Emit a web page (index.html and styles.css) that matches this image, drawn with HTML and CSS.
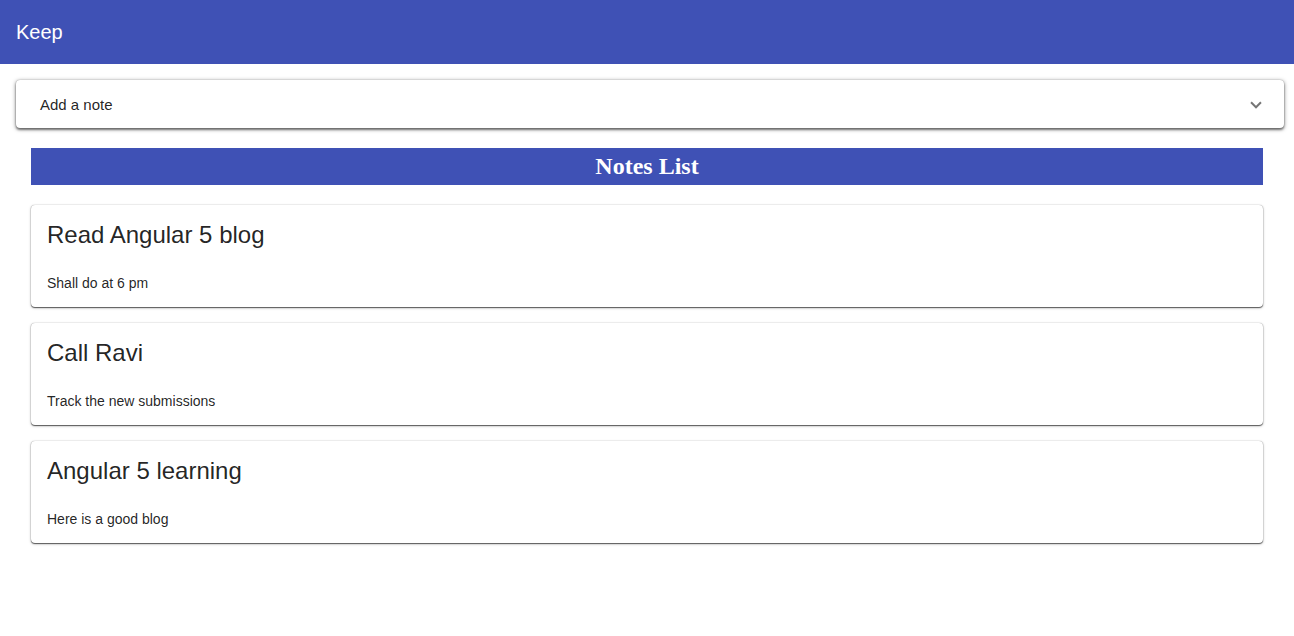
FILE: index.html
```html
<!DOCTYPE html>
<html>
<head>
<meta charset="utf-8">
<link rel="stylesheet" href="styles.css">
</head>
<body>
<header class="toolbar">Keep</header>
<main class="content">
  <div class="panel">
    <span class="panel-title">Add a note</span>
    <span class="chevron"></span>
  </div>
  <section class="notes">
    <h2 class="notes-heading">Notes List</h2>
    <div class="card">
      <div class="card-title">Read Angular 5 blog</div>
      <div class="card-text">Shall do at 6 pm</div>
    </div>
    <div class="card">
      <div class="card-title">Call Ravi</div>
      <div class="card-text">Track the new submissions</div>
    </div>
    <div class="card">
      <div class="card-title">Angular 5 learning</div>
      <div class="card-text">Here is a good blog</div>
    </div>
  </section>
</main>
</body>
</html>
```
FILE: styles.css
```css
html, body {
  margin: 0;
  padding: 0;
  background: #fff;
  font-family: "Liberation Sans", Arial, sans-serif;
  color: rgba(0, 0, 0, 0.87);
}

.toolbar {
  height: 64px;
  background: #3f51b5;
  color: #fff;
  font-size: 20px;
  display: flex;
  align-items: center;
  padding: 0 16px;
  box-sizing: border-box;
}

.content {
  padding: 16px 10px 16px 16px;
}

.panel {
  height: 48px;
  box-sizing: border-box;
  padding: 0 24px;
  display: flex;
  align-items: center;
  justify-content: space-between;
  background: #fff;
  border-radius: 4px;
  box-shadow: 0 0 1px rgba(0,0,0,.35), 0 1px 4px rgba(0,0,0,.5), 0 2px 2px rgba(0,0,0,.35);
}

.panel-title {
  font-size: 15px;
}

.chevron {
  width: 6px;
  height: 6px;
  border-style: solid;
  border-color: rgba(0, 0, 0, 0.54);
  border-width: 0 2px 2px 0;
  transform: rotate(45deg);
  margin-right: 0;
  margin-top: -3px;
}

.notes {
  padding: 20px 21px 0 15px;
  display: flex;
  flex-direction: column;
  gap: 16px;
}

.notes-heading {
  margin: 0 0 4px;
  height: 37px;
  line-height: 37px;
  background: #3f51b5;
  color: #fff;
  text-align: center;
  font-family: "Liberation Serif", "Times New Roman", serif;
  font-weight: bold;
  font-size: 24px;
}

.card {
  background: #fff;
  border-radius: 4px;
  padding: 16px;
  height: 102px;
  box-sizing: border-box;
  box-shadow: 0 0 1px rgba(0,0,0,.4), 0 1px 1px rgba(0,0,0,.55), 0 1px 3px rgba(0,0,0,.25);
}

.card-title {
  font-size: 24px;
  line-height: 28px;
  margin-bottom: 25px;
}

.card-text {
  font-size: 14px;
  line-height: 18px;
}
```
